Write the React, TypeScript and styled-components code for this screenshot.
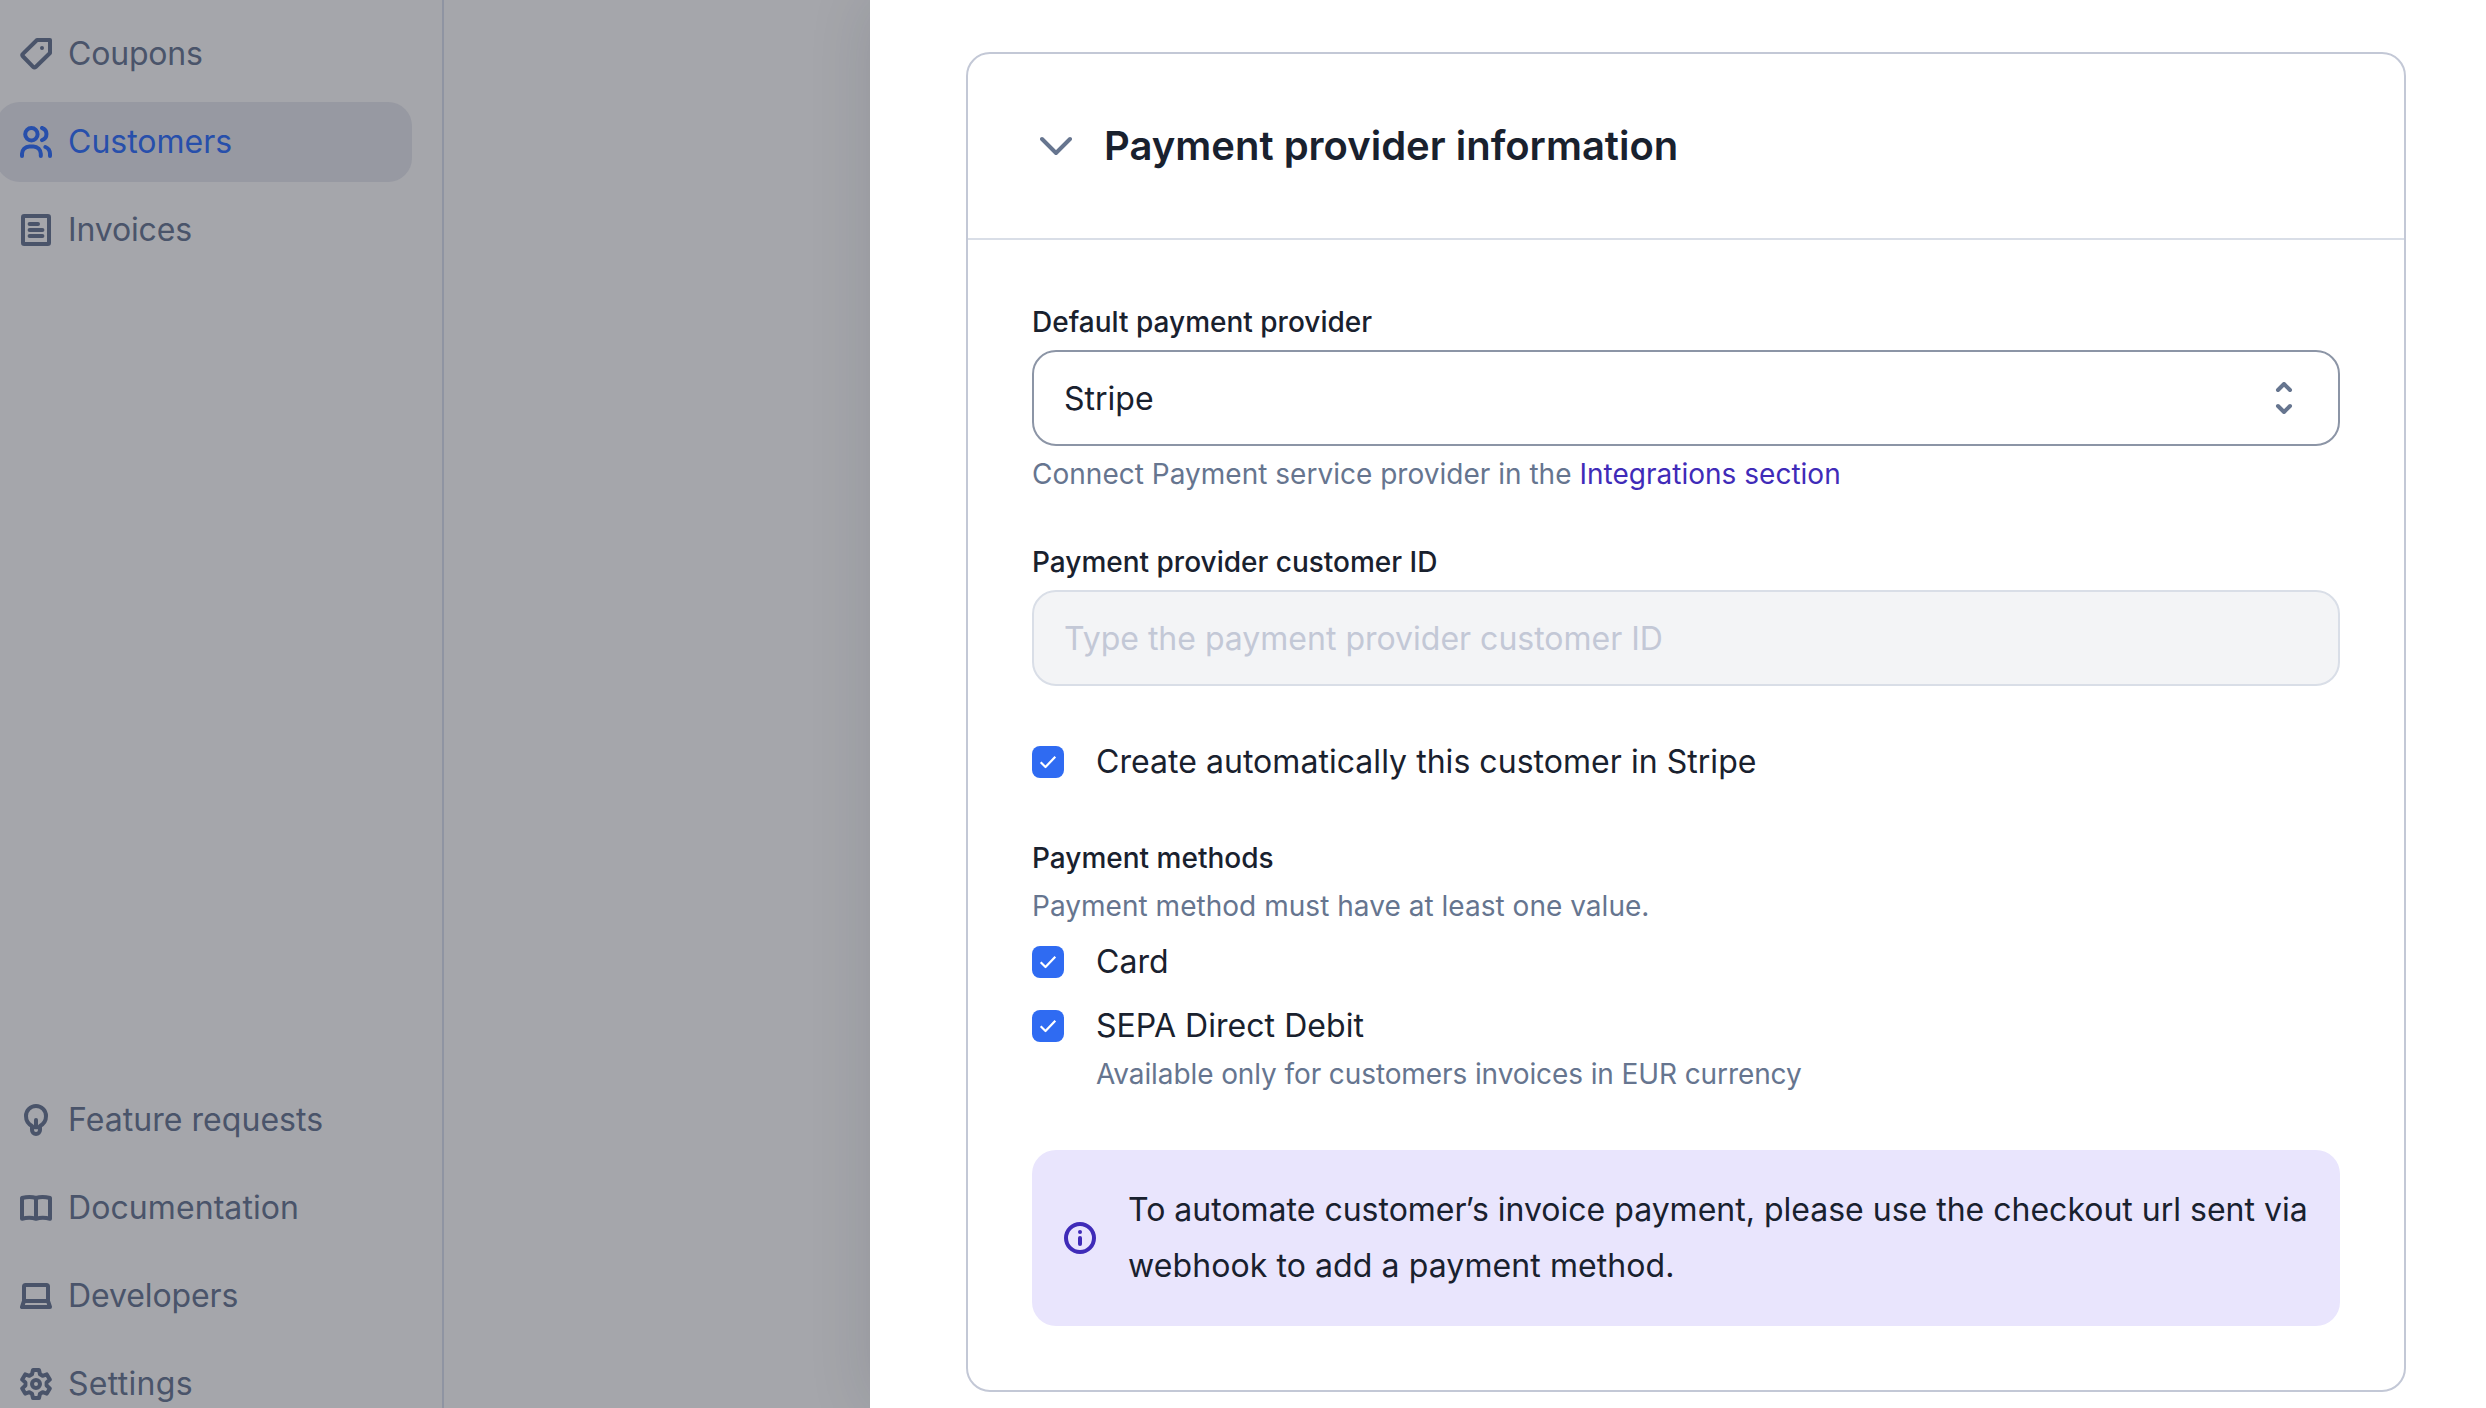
import React from "react";
import styled, { createGlobalStyle } from "styled-components";

const GlobalStyle = createGlobalStyle`
  * { box-sizing: border-box; }
  html, body { margin: 0; padding: 0; }
  body {
    width: 2486px;
    height: 1408px;
    overflow: hidden;
    background: #a5a6ab;
    font-family: Inter, "Liberation Sans", sans-serif;
    font-size: 32px;
    color: #19212e;
    -webkit-font-smoothing: antialiased;
  }
`;

const Page = styled.div`
  display: flex;
  width: 2486px;
  height: 1408px;
  overflow: hidden;
`;

const Sidebar = styled.nav`
  display: flex;
  flex-direction: column;
  justify-content: space-between;
  width: 444px;
  flex: none;
  height: 1424px;
  padding: 14px 30px 0 0;
  border-right: 2px solid #8f94a2;
`;

const NavGroup = styled.ul`
  display: flex;
  flex-direction: column;
  gap: 8px;
  margin: 0 0 0 -4px;
  padding: 0;
  list-style: none;
`;

const NavItem = styled.li<{ $active?: boolean; $tracking?: number }>`
  display: flex;
  align-items: center;
  gap: 16px;
  width: 416px;
  height: 80px;
  padding: 0 24px;
  border-radius: 24px;
  line-height: 56px;
  letter-spacing: ${(p) => p.$tracking ?? 0}px;
  color: ${(p) => (p.$active ? "#274fab" : "#4a546a")};
  background: ${(p) => (p.$active ? "#9799a2" : "transparent")};
`;

const Icon = styled.svg`
  width: 32px;
  height: 32px;
  flex: none;
  fill: none;
  stroke: currentColor;
  stroke-width: 2;
  stroke-linecap: round;
  stroke-linejoin: round;
`;

const Backdrop = styled.div`
  flex: none;
  width: 426px;
`;

const Drawer = styled.main`
  flex: 1;
  height: 1408px;
  padding: 52px 80px 0 96px;
  background: #fff;
  box-shadow: 0 0 60px rgba(25, 33, 46, 0.12);
`;

const Card = styled.section`
  height: 1340px;
  border: 2px solid #c3c8d6;
  border-radius: 24px;
`;

const CardHeader = styled.header`
  display: flex;
  align-items: center;
  gap: 32px;
  height: 186px;
  padding: 0 72px;
  border-bottom: 2px solid #d9dee7;
`;

const Title = styled.h2`
  margin: 0;
  font-size: 40px;
  line-height: 56px;
  font-weight: 600;
`;

const CardBody = styled.div`
  display: flex;
  flex-direction: column;
  padding: 62px 64px;
`;

const Field = styled.div`
  display: flex;
  flex-direction: column;
  margin-bottom: 48px;
`;

const Label = styled.div`
  height: 40px;
  margin-bottom: 8px;
  font-size: 28px;
  line-height: 40px;
  font-weight: 500;
`;

const Helper = styled.div`
  font-size: 28px;
  line-height: 40px;
  letter-spacing: 0.03px;
  color: #66758f;
`;

const Link = styled.a`
  color: #3f2bb8;
`;

const InputBox = styled.div<{ $disabled?: boolean }>`
  display: flex;
  align-items: center;
  justify-content: space-between;
  height: 96px;
  padding: 0 38px 0 30px;
  border: 2px solid ${(p) => (p.$disabled ? "#d9dee7" : "#8c95a6")};
  border-radius: 24px;
  background: ${(p) => (p.$disabled ? "#f3f4f6" : "#fff")};
  color: ${(p) => (p.$disabled ? "#c3c8d6" : "#19212e")};
`;

const SelectHelper = styled(Helper)`
  margin-top: 8px;
  letter-spacing: 0.015px;
`;

const CheckRow = styled.label`
  display: flex;
  align-items: center;
  gap: 32px;
  height: 56px;
  line-height: 56px;
  letter-spacing: 0.04px;
`;

const CheckBox = styled.span`
  display: flex;
  align-items: center;
  justify-content: center;
  width: 32px;
  height: 32px;
  border-radius: 8px;
  background: #2f6bf2;
  color: #fff;
`;

const Methods = styled.div`
  display: flex;
  flex-direction: column;
  margin-top: 48px;
`;

const MethodList = styled.div`
  display: flex;
  flex-direction: column;
  gap: 8px;
  margin-top: 8px;
`;

const MethodHelper = styled(Helper)`
  margin-left: 64px;
  letter-spacing: -0.1px;
`;

const Alert = styled.aside`
  display: flex;
  align-items: center;
  gap: 32px;
  height: 176px;
  margin-top: 56px;
  padding: 0 0 0 32px;
  border-radius: 24px;
  background: #e9e5fd;
  line-height: 56px;
`;

const AlertText = styled.p`
  margin: 0;
  white-space: nowrap;
`;

const Apostrophe = styled.span`
  margin: 0 -2px 0 -1px;
`;

const LastLine = styled.span`
  letter-spacing: 0.09px;
`;

const AlertIcon = styled(Icon)`
  color: #3f2bb8;
`;

const TagIcon = () => (
  <Icon viewBox="0 0 16 16">
    <path d="M15 1H8.5L1.3 8.100a.6.6 0 0 0 0 .9l5.400 5.600a.7.7 0 0 0 1 0L15 7.500z" />
    <circle cx="11" cy="5" r="1" fill="currentColor" stroke="none" />
  </Icon>
);
const UsersIcon = () => (
  <Icon viewBox="0 0 16 16">
    <circle cx="5.700" cy="4.100" r="3.100" />
    <path d="M1 15v-1.100A3.700 3.700 0 0 1 4.700 10.200h2A3.700 3.700 0 0 1 10.400 13.900V15M11 1a3.200 3.200 0 0 1 0 6.100M12.700 10.500A3.700 3.700 0 0 1 15 13.900V15" />
  </Icon>
);
const InvoiceIcon = () => (
  <Icon viewBox="0 0 16 16">
    <rect x="1.500" y="1" width="13" height="14" rx="0.600" />
    <path d="M4.800 5h4.200M4.800 8h6.400M4.800 11h6.400" />
  </Icon>
);
const BulbIcon = () => (
  <Icon viewBox="0 0 16 16">
    <path d="M6 11C4.200 10 3 8.200 3 6a5 5 0 0 1 10 0c0 2.200-1.200 4-3 5v2a2 2 0 0 1-4 0zM8 8v3.500M6 11.600h4" />
  </Icon>
);
const BookIcon = () => (
  <Icon viewBox="0 0 16 16">
    <path d="M8 3v10.400M8 3C6 2.300 3.500 2.300 1 3v10.400c2.300-.6 5-.6 7 0 2-.6 4.700-.6 7 0V3C12.500 2.300 10 2.300 8 3" />
  </Icon>
);
const LaptopIcon = () => (
  <Icon viewBox="0 0 16 16">
    <path d="M2 10.500V3.300a.8.8 0 0 1 .8-.8h10.400a.8.8 0 0 1 .8.8v7.200M2 10.500h12M2 10.500l-1 3h14l-1-3" />
  </Icon>
);
const GearIcon = () => (
  <Icon viewBox="0 0 16 16">
    <circle cx="8" cy="8" r="2" />
    <path d="M6.500 1h3l.5 2.100 1.300.8 2.100-.7 1.500 2.600L13.300 7.200v1.600l1.600 1.400-1.500 2.600-2.100-.7-1.300.8L9.500 15h-3L6 12.900l-1.300-.8-2.100.7-1.500-2.600 1.600-1.400V7.200L1.100 5.800l1.500-2.600 2.100.7L6 3.100z" />
  </Icon>
);
const ChevronIcon = styled(Icon)`
  color: #66758f;
`;
const CheckIcon = styled(Icon)`
  stroke-width: 2.2;
  stroke-linecap: butt;
`;

function Checked() {
  return (
    <CheckBox>
      <CheckIcon viewBox="0 0 32 32">
        <path d="M8.700 16.300l4.800 4.700 9.800-10.200" />
      </CheckIcon>
    </CheckBox>
  );
}

export default function App() {
  return (
    <Page>
      <GlobalStyle />
      <Sidebar>
        <NavGroup>
          <NavItem $tracking={-0.2}><TagIcon />Coupons</NavItem>
          <NavItem $active><UsersIcon />Customers</NavItem>
          <NavItem $tracking={-0.15}><InvoiceIcon />Invoices</NavItem>
        </NavGroup>
        <NavGroup>
          <NavItem $tracking={0.05}><BulbIcon />Feature requests</NavItem>
          <NavItem $tracking={0.08}><BookIcon />Documentation</NavItem>
          <NavItem $tracking={-0.1}><LaptopIcon />Developers</NavItem>
          <NavItem $tracking={0.3}><GearIcon />Settings</NavItem>
        </NavGroup>
      </Sidebar>
      <Backdrop />
      <Drawer>
        <Card>
          <CardHeader>
            <ChevronIcon viewBox="0 0 16 16">
              <path d="M1 4.500l7 7 7-7" />
            </ChevronIcon>
            <Title>Payment provider information</Title>
          </CardHeader>
          <CardBody>
            <Field>
              <Label>Default payment provider</Label>
              <InputBox>
                Stripe
                <ChevronIcon viewBox="0 0 16 16">
                  <path d="M5 4l3-3 3 3M5 12l3 3 3-3" />
                </ChevronIcon>
              </InputBox>
              <SelectHelper>
                Connect Payment service provider in the <Link>Integrations section</Link>
              </SelectHelper>
            </Field>
            <Field>
              <Label>Payment provider customer ID</Label>
              <InputBox $disabled>Type the payment provider customer ID</InputBox>
            </Field>
            <CheckRow><Checked />Create automatically this customer in Stripe</CheckRow>
            <Methods>
              <Label>Payment methods</Label>
              <Helper>Payment method must have at least one value.</Helper>
              <MethodList>
                <CheckRow><Checked />Card</CheckRow>
                <CheckRow><Checked />SEPA Direct Debit</CheckRow>
              </MethodList>
              <MethodHelper>Available only for customers invoices in EUR currency</MethodHelper>
            </Methods>
            <Alert>
              <AlertIcon viewBox="0 0 16 16">
                <circle cx="8" cy="8" r="7" />
                <path d="M8 8v3" />
                <circle cx="8" cy="5" r="1" fill="currentColor" stroke="none" />
              </AlertIcon>
              <AlertText>
                To automate customer<Apostrophe>’</Apostrophe>s invoice payment, please use the checkout url sent via
                <br />
                <LastLine>webhook to add a payment method.</LastLine>
              </AlertText>
            </Alert>
          </CardBody>
        </Card>
      </Drawer>
    </Page>
  );
}
